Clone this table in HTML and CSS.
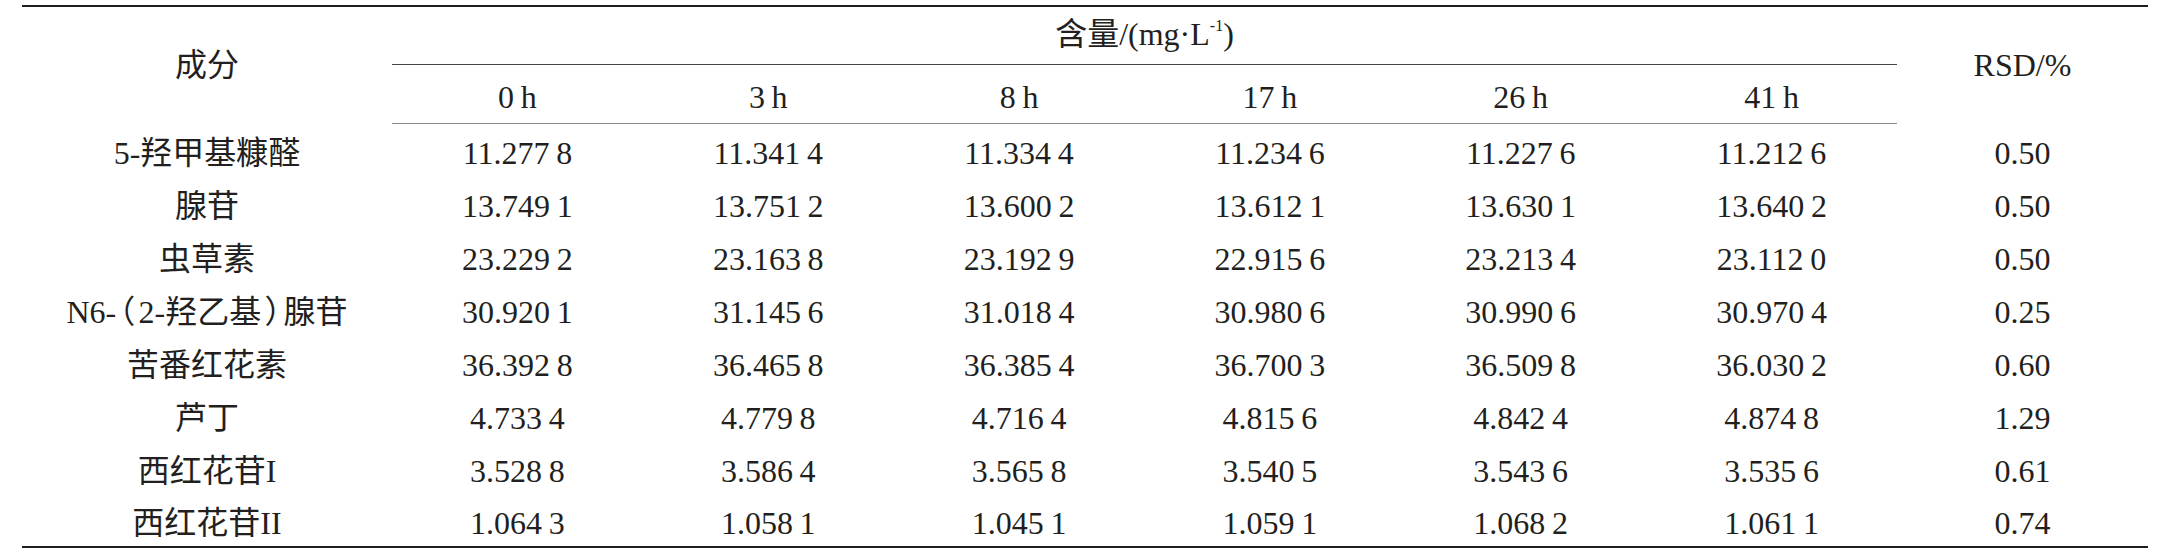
FILE: index.html
```html
<!DOCTYPE html>
<html lang="en">
<head>
    <meta charset="UTF-8">
    <title>含量测定结果</title>
    <link rel="stylesheet" href="styles.css">
</head>
<body>
<table class="data-table">
    <thead>
        <tr class="head-top">
            <th rowspan="2" class="col-name">成分</th>
            <th colspan="6" class="group">含量/(mg·L<sup>-1</sup>)</th>
            <th rowspan="2" class="col-rsd">RSD/%</th>
        </tr>
        <tr class="head-sub">
            <th>0 h</th>
            <th>3 h</th>
            <th>8 h</th>
            <th>17 h</th>
            <th>26 h</th>
            <th>41 h</th>
        </tr>
    </thead>
    <tbody>
        <tr><td>5-羟甲基糠醛</td><td>11.277 8</td><td>11.341 4</td><td>11.334 4</td><td>11.234 6</td><td>11.227 6</td><td>11.212 6</td><td>0.50</td></tr>
        <tr><td>腺苷</td><td>13.749 1</td><td>13.751 2</td><td>13.600 2</td><td>13.612 1</td><td>13.630 1</td><td>13.640 2</td><td>0.50</td></tr>
        <tr><td>虫草素</td><td>23.229 2</td><td>23.163 8</td><td>23.192 9</td><td>22.915 6</td><td>23.213 4</td><td>23.112 0</td><td>0.50</td></tr>
        <tr><td>N6-<span class="paren">（</span>2-羟乙基<span class="paren">）</span>腺苷</td><td>30.920 1</td><td>31.145 6</td><td>31.018 4</td><td>30.980 6</td><td>30.990 6</td><td>30.970 4</td><td>0.25</td></tr>
        <tr><td>苦番红花素</td><td>36.392 8</td><td>36.465 8</td><td>36.385 4</td><td>36.700 3</td><td>36.509 8</td><td>36.030 2</td><td>0.60</td></tr>
        <tr><td>芦丁</td><td>4.733 4</td><td>4.779 8</td><td>4.716 4</td><td>4.815 6</td><td>4.842 4</td><td>4.874 8</td><td>1.29</td></tr>
        <tr><td>西红花苷I</td><td>3.528 8</td><td>3.586 4</td><td>3.565 8</td><td>3.540 5</td><td>3.543 6</td><td>3.535 6</td><td>0.61</td></tr>
        <tr><td>西红花苷II</td><td>1.064 3</td><td>1.058 1</td><td>1.045 1</td><td>1.059 1</td><td>1.068 2</td><td>1.061 1</td><td>0.74</td></tr>
    </tbody>
</table>
</body>
</html>
```

FILE: styles.css
```css
* {
    margin: 0;
    padding: 0;
    box-sizing: border-box;
}
body {
    background-color: #fff;
    color: #231f20;
    font-family: "Liberation Serif", "Times New Roman", "Noto Sans CJK SC", serif;
    font-size: 32px;
    padding: 5px 0 0 22px;
}
.data-table {
    width: 2126px;
    border-collapse: collapse;
    table-layout: fixed;
    border-top: 2.5px solid #1e1e1e;
    border-bottom: 2.5px solid #1e1e1e;
}
.data-table th,
.data-table td {
    font-family: "Liberation Serif", "Times New Roman", "Noto Sans CJK SC", serif;
    font-weight: normal;
    text-align: center;
    vertical-align: middle;
    line-height: 1;
    word-spacing: -0.04em;
    padding: 0;
}
.col-name {
    width: 370px;
}
.col-rsd {
    width: 251px;
}
.head-top th {
    height: 58px;
}
.head-top .group {
    border-bottom: 1.5px solid #444;
    padding-bottom: 2px;
}
.head-sub th {
    height: 59px;
    padding-top: 6px;
    border-bottom: 1px solid #888;
}
.data-table tbody td {
    height: 53px;
    padding-top: 6px;
}
.data-table sup {
    font-size: 0.5em;
    vertical-align: 0.9em;
    line-height: 0;
}
.paren {
    font-feature-settings: "halt";
    margin: 0 0.1em;
}
```
